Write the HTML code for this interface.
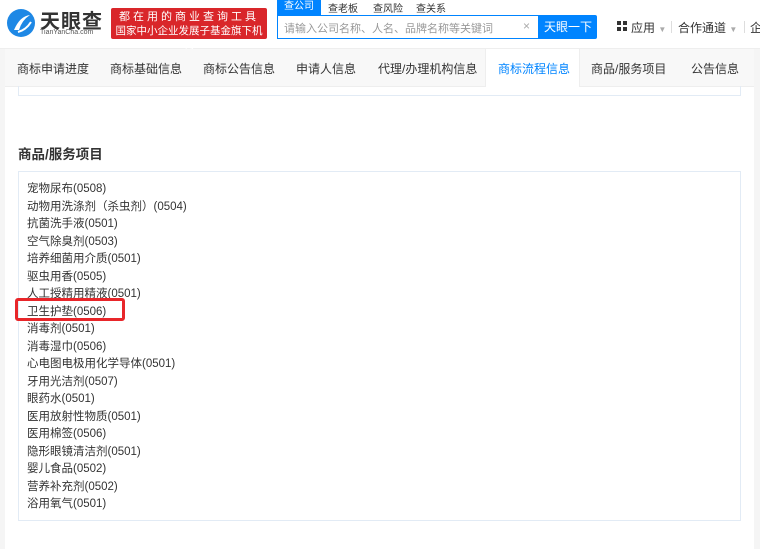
<!DOCTYPE html>
<html><head><meta charset="utf-8"><style>
body{margin:0;width:760px;height:537px;overflow:hidden;background:#f5f5f5;font-family:"Liberation Sans","Noto Sans CJK SC",sans-serif;position:relative}
.hdr{position:absolute;left:0;top:0;width:760px;height:48px;background:#fff;border-bottom:1px solid #eee}
.main{position:absolute;left:5px;top:49px;width:749px;height:500px;background:#fff}
.tabs{position:absolute;left:5px;top:49px;width:749px;height:37px;background:#f8f8f8;border-bottom:1px solid #eee;font-size:12px;color:#333}
.tabs span{position:absolute;top:11px}
.act{position:absolute;left:480px;top:0;width:93px;height:38px;background:#fff;border-left:1px solid #eee;border-right:1px solid #eee}
.list{position:absolute;left:18px;top:171px;width:721px;height:348px;border:1px solid #e2ebf5}
.list div{position:absolute;left:8px;font-size:11.5px;color:#333;white-space:nowrap}
</style></head><body>
<div class="hdr">
<svg style="position:absolute;left:6px;top:8px" width="30" height="30" viewBox="0 0 30 30"><circle cx="15" cy="15" r="14" fill="#1e88e5"/><path d="M8 22 Q14 8 24 7 Q16 12 13 22Z" fill="#fff"/><path d="M12 24 Q20 22 25 14" stroke="#fff" stroke-width="2" fill="none"/></svg>
<div style="position:absolute;left:40px;top:5px;font-size:20px;font-weight:bold;color:#333;letter-spacing:1px">天眼查</div>
<div style="position:absolute;left:40px;top:29px;font-size:7px;color:#555">TianYanCha.com</div>
<div style="position:absolute;left:111px;top:8px;width:156px;height:31px;background:#d9262a;color:#fff;border-radius:2px;font-size:11px;line-height:14px;text-align:center;padding-top:2px;box-sizing:border-box"><div style="letter-spacing:3px">都在用的商业查询工具</div><div style="font-size:10.5px">国家中小企业发展子基金旗下机构</div></div>
<div style="position:absolute;left:277px;top:0;width:44px;height:15px;background:#0084ff;color:#fff;font-size:10px;text-align:center;line-height:14px">查公司</div>
<div style="position:absolute;left:328px;top:0;font-size:10px;color:#333">查老板</div>
<div style="position:absolute;left:373px;top:0;font-size:10px;color:#333">查风险</div>
<div style="position:absolute;left:416px;top:0;font-size:10px;color:#333">查关系</div>
<div style="position:absolute;left:277px;top:15px;width:262px;height:24px;border:1px solid #0084ff;box-sizing:border-box;background:#fff"><span style="position:absolute;left:6px;top:4px;font-size:11px;color:#999">请输入公司名称、人名、品牌名称等关键词</span><span style="position:absolute;left:245px;top:3px;font-size:12px;color:#aaa">×</span></div>
<div style="position:absolute;left:539px;top:15px;width:58px;height:24px;background:#0084ff;color:#fff;font-size:12px;text-align:center;line-height:24px;border-radius:0 2px 2px 0">天眼一下</div>
<svg style="position:absolute;left:617px;top:21px" width="10" height="10"><rect x="0" y="0" width="4" height="4" fill="#333"/><rect x="6" y="0" width="4" height="4" fill="#333"/><rect x="0" y="6" width="4" height="4" fill="#333"/><rect x="6" y="6" width="4" height="4" fill="#333"/></svg>
<div style="position:absolute;left:631px;top:19px;font-size:12px;color:#333">应用 <span style="color:#aaa;font-size:8px">▼</span></div>
<div style="position:absolute;left:671px;top:21px;width:1px;height:12px;background:#ddd"></div>
<div style="position:absolute;left:678px;top:19px;font-size:12px;color:#333">合作通道 <span style="color:#aaa;font-size:8px">▼</span></div>
<div style="position:absolute;left:744px;top:21px;width:1px;height:12px;background:#ddd"></div>
<div style="position:absolute;left:750px;top:19px;font-size:12px;color:#333">企</div>
</div>
<div class="main"></div>
<div class="tabs"><div class="act"></div>
<span style="left:12px">商标申请进度</span><span style="left:105px">商标基础信息</span><span style="left:198px">商标公告信息</span><span style="left:291px">申请人信息</span><span style="left:373px">代理/办理机构信息</span><span style="left:493px;color:#0084ff">商标流程信息</span><span style="left:586px">商品/服务项目</span><span style="left:686px">公告信息</span></div>
<div style="position:absolute;left:18px;top:86px;width:721px;height:9px;border:1px solid #e2ebf5;border-top:none"></div>
<div style="position:absolute;left:18px;top:143px;font-size:13.5px;font-weight:bold;color:#333">商品/服务项目</div>
<div class="list">
<div style="top:8px">宠物尿布(0508)</div>
<div style="top:25.5px">动物用洗涤剂（杀虫剂）(0504)</div>
<div style="top:43px">抗菌洗手液(0501)</div>
<div style="top:60.5px">空气除臭剂(0503)</div>
<div style="top:78px">培养细菌用介质(0501)</div>
<div style="top:95.5px">驱虫用香(0505)</div>
<div style="top:113px">人工授精用精液(0501)</div>
<div style="top:130.5px">卫生护垫(0506)</div>
<div style="top:148px">消毒剂(0501)</div>
<div style="top:165.5px">消毒湿巾(0506)</div>
<div style="top:183px">心电图电极用化学导体(0501)</div>
<div style="top:200.5px">牙用光洁剂(0507)</div>
<div style="top:218px">眼药水(0501)</div>
<div style="top:235.5px">医用放射性物质(0501)</div>
<div style="top:253px">医用棉签(0506)</div>
<div style="top:270.5px">隐形眼镜清洁剂(0501)</div>
<div style="top:288px">婴儿食品(0502)</div>
<div style="top:305.5px">营养补充剂(0502)</div>
<div style="top:323px">浴用氧气(0501)</div>
</div>
<div style="position:absolute;left:15px;top:298px;width:110px;height:23px;border:3px solid #e8262a;border-radius:3px;box-sizing:border-box"></div>
</body></html>
